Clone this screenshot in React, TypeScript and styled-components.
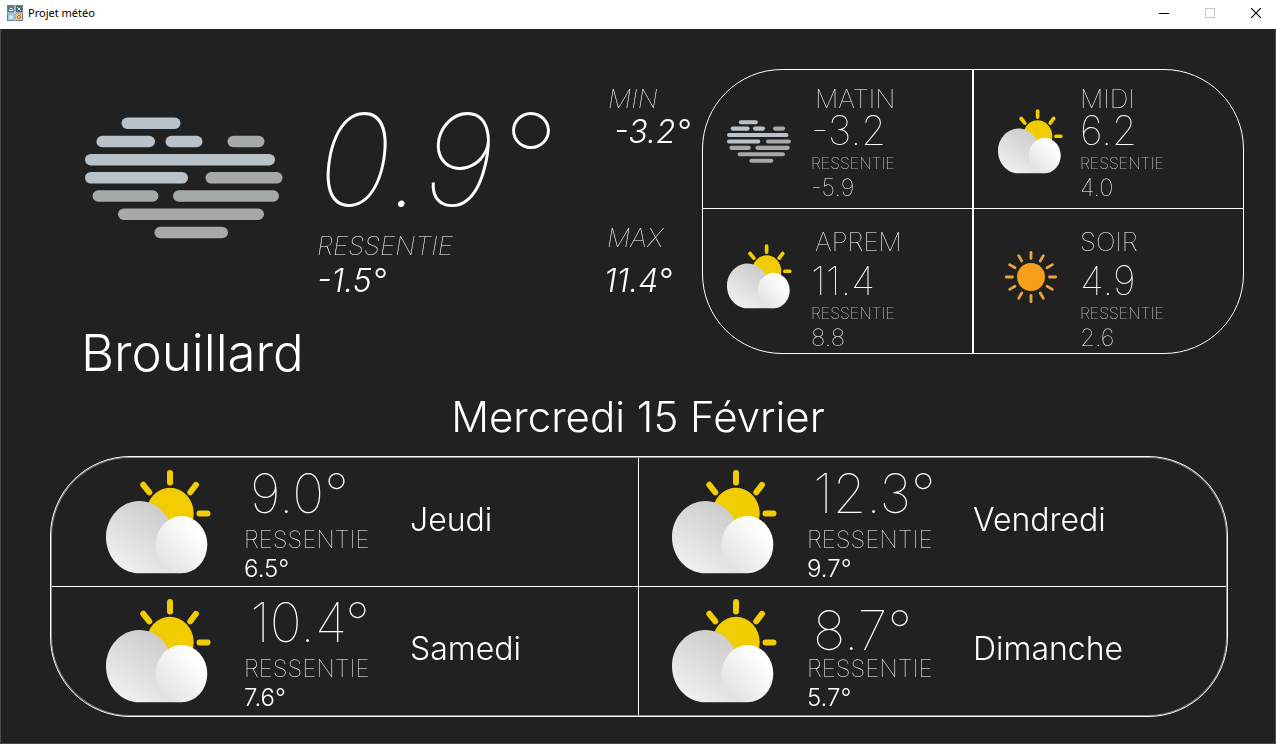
import React, { useId } from "react";
import styled, { createGlobalStyle } from "styled-components";

const GlobalStyle = createGlobalStyle`
  *, *::before, *::after { box-sizing: border-box; }
  body {
    margin: 0;
    background: #212121;
    color: #fff;
    font-family: Inter, "Liberation Sans", sans-serif;
    font-optical-sizing: none;
  }
  h1, h2, h3, p { margin: 0; font-weight: inherit; }
`;

/* ---------- window chrome ---------- */

const Window = styled.div`
  display: flex;
  flex-direction: column;
  min-height: 100vh;
`;

const TitleBar = styled.header`
  display: flex;
  align-items: center;
  height: 29px;
  padding: 0 0 3px 7px;
  background: #fff;
  color: #000;
`;

const WindowTitle = styled.span`
  flex: 1;
  margin-left: 5px;
  font: 400 11px/20px "Noto Sans", "Open Sans", sans-serif;
`;

const WindowControls = styled.div`
  display: flex;
  gap: 6px;
`;

const WindowButton = styled.button`
  display: flex;
  align-items: center;
  justify-content: center;
  width: 40px;
  height: 26px;
  padding: 0;
  border: 0;
  background: transparent;
  color: #000;

  &:disabled {
    color: #c8c8c8;
  }
`;

const Content = styled.main`
  flex: 1;
  padding: 40px 0 24px;
  border: 1px solid #4a4a4a;
  border-top: 0;
  will-change: transform;
`;

/* ---------- current weather ---------- */

const Overview = styled.section`
  display: grid;
  grid-template-columns: minmax(0, 1fr) minmax(0, 542px);
  align-items: start;
  padding-right: 31px;
`;

const Current = styled.div`
  padding-left: 80px;
`;

const CurrentRow = styled.div`
  display: grid;
  grid-template-columns: 236px minmax(0, 1fr) 98px;
`;

const CurrentIcon = styled.div`
  padding: 48px 0 0 4px;
`;

const CurrentReading = styled.div`
  padding-top: 27px;
`;

const CurrentTemp = styled.p`
  margin-bottom: 6px;
  font-size: 128px;
  font-style: italic;
  font-weight: 100;
  line-height: 128px;
  white-space: nowrap;
`;

const Extremes = styled.div`
  display: flex;
  flex-direction: column;
  gap: 73px;
  padding-top: 14px;
`;

const Stat = styled.div<{ $gap: number }>`
  display: flex;
  flex-direction: column;
  gap: ${(p) => p.$gap}px;
  font-style: italic;
  white-space: nowrap;
`;

const StatLabel = styled.span<{ $inset?: number }>`
  padding-left: ${(p) => p.$inset ?? 0}px;
  font-size: 26px;
  font-weight: 100;
  line-height: 32px;
`;

const StatValue = styled.span<{ $inset?: number }>`
  padding-left: ${(p) => p.$inset ?? 0}px;
  font-size: 32px;
  font-weight: 300;
  line-height: 34px;
`;

const Condition = styled.h1`
  margin-top: 25px;
  font-size: 51px;
  font-weight: 300;
  line-height: 60px;
`;

/* ---------- forecast by time of day ---------- */

const HourPanel = styled.div`
  display: grid;
  grid-template-columns: calc(50% - 1px) minmax(0, 1fr);
  overflow: hidden;
  border: 1px solid #fff;
  border-radius: 80px;
`;

const HourCell = styled.article<{ $right?: boolean; $lower?: boolean }>`
  display: grid;
  grid-template-columns: ${(p) => (p.$right ? "82px" : "84px")} minmax(0, 1fr);
  padding: ${(p) => (p.$lower ? "17px 0 2px" : "13px 0 7px")};
  padding-left: 24px;
  border-left: ${(p) => (p.$right ? "2px solid #fff" : "0")};
  border-top: ${(p) => (p.$lower ? "1px solid #fff" : "0")};
  white-space: nowrap;
`;

const HourIcon = styled.div<{ $drop: number }>`
  padding-top: ${(p) => p.$drop}px;
`;

const HourName = styled.h3<{ $gap: number; $inset: number }>`
  padding-left: ${(p) => p.$inset}px;
  margin-bottom: ${(p) => p.$gap}px;
  font-size: 26px;
  font-weight: 100;
  line-height: 32px;
`;

const HourTemp = styled.p`
  margin-bottom: 4px;
  font-size: 40px;
  font-weight: 100;
  line-height: 32px;
`;

const HourLabel = styled.p`
  font-size: 16px;
  font-weight: 100;
  line-height: 24px;
`;

const HourFeels = styled.p`
  font-size: 24px;
  font-weight: 100;
  line-height: 26px;
`;

/* ---------- following days ---------- */

const Today = styled.h2`
  margin: 9px 0 14px;
  font-size: 42px;
  font-weight: 300;
  line-height: 50px;
  text-align: center;
`;

const DayPanel = styled.section`
  display: grid;
  grid-template-columns: calc(50% - 1px) minmax(0, 1fr);
  margin: 0 47px 0 49px;
  padding: 1px;
  border: 1px solid #fff;
  border-radius: 80px;
  box-shadow: inset 0 0 0 1px #8c8c8c;
`;

const DayCell = styled.article<{ $right?: boolean; $lower?: boolean }>`
  display: grid;
  grid-template-columns: ${(p) => (p.$right ? "135px" : "138px")} 166px minmax(0, 1fr);
  padding-left: ${(p) => (p.$right ? "33px" : "54px")};
  border-left: ${(p) => (p.$right ? "1px solid #fff" : "0")};
  border-top: ${(p) => (p.$lower ? "1px solid #fff" : "0")};
  white-space: nowrap;
`;

const DayIcon = styled.div`
  padding-top: 12px;
`;

const DayReading = styled.div<{ $low?: boolean }>`
  padding: ${(p) => (p.$low ? "24px" : "8px")} 0 4px;
`;

const DayTemp = styled.p<{ $low?: boolean }>`
  margin-bottom: 2px;
  padding-left: 6px;
  font-size: 54px;
  font-weight: 100;
  line-height: ${(p) => (p.$low ? "40px" : "56px")};
`;

const DayLabel = styled.p`
  font-size: 24px;
  font-weight: 100;
  line-height: 32px;
`;

const DayFeels = styled.p`
  font-size: 24px;
  font-weight: 300;
  line-height: 26px;
`;

const DayName = styled.h3`
  align-self: center;
  padding-bottom: 4px;
  font-size: 32px;
  font-weight: 300;
  line-height: 40px;
`;

/* ---------- drawings ---------- */

const Drawing = styled.svg`
  display: block;
`;

const fogBars: [number, number, number, boolean][] = [
  [36.5, 95.5, 0, true],
  [11.5, 70, 1, true],
  [80.5, 117.5, 1, true],
  [142.5, 179.5, 1, false],
  [0, 190, 2, true],
  [0, 103, 3, true],
  [120.5, 197.5, 3, false],
  [7.5, 73.5, 4, false],
  [88, 194, 4, false],
  [33, 179, 5, false],
  [69.5, 143, 6, false],
];

function FogIcon({ width, height }: { width: number; height: number }) {
  return (
    <Drawing width={width} height={height} viewBox="0 0 198 122" preserveAspectRatio="none" aria-hidden>
      {fogBars.map(([from, to, row, bright]) => (
        <rect
          key={`${row}-${from}`}
          x={from}
          y={0.5 + row * 18.2}
          width={to - from}
          height="11.5"
          rx="5.75"
          fill={bright ? "#b9c1c9" : "#a5a9a9"}
        />
      ))}
    </Drawing>
  );
}

function CloudSunIcon({ width, height }: { width: number; height: number }) {
  const id = useId();
  return (
    <Drawing width={width} height={height} viewBox="0 0 105 104" aria-hidden>
      <defs>
        <linearGradient id={`${id}back`} x1="0.75" y1="0.15" x2="0.2" y2="0.95">
          <stop offset="0" stopColor="#cdcdcd" />
          <stop offset="1" stopColor="#f0f0f0" />
        </linearGradient>
        <linearGradient id={`${id}front`} x1="0.75" y1="0.2" x2="0.1" y2="0.85">
          <stop offset="0" stopColor="#ffffff" />
          <stop offset="1" stopColor="#e2e2e2" />
        </linearGradient>
      </defs>
      <g stroke="#f0cc00" strokeWidth="6" strokeLinecap="round">
        <path d="M64 3v9.5M93.5 43.5h8M90 14.8l-5.7 7.5M37.3 14.8l6 7.5" />
      </g>
      <ellipse cx="64" cy="43.3" rx="23.7" ry="25.6" fill="#f0cc00" />
      <path
        d="M33.3 31C51.5 31 66.5 47.1 66.5 67S75 103.300 75 103.300H33.300C15 103.300 0 87.100 0 67.200S15 31 33.300 31Z"
        fill={`url(#${id}back)`}
      />
      <ellipse cx="75.500" cy="74.700" rx="25.800" ry="28.600" fill={`url(#${id}front)`} />
    </Drawing>
  );
}

function SunIcon() {
  return (
    <Drawing width="54" height="54" viewBox="-27 -27 54 54" aria-hidden>
      <circle r="14" fill="#f79f1a" />
      <g stroke="#eba439" strokeWidth="2.800" strokeLinecap="round">
        {Array.from({ length: 12 }, (_, i) => (
          <path key={i} d="M0-24.700V-18.500" transform={`rotate(${i * 30})`} />
        ))}
      </g>
    </Drawing>
  );
}

function AppIcon() {
  return (
    <Drawing width="16" height="16" viewBox="0 0 16 16" aria-hidden>
      <path fill="#6f7d84" d="M0 0h16v16H0z" />
      <path fill="#5b7b8c" d="M1 1h6v6H1z" />
      <path fill="#3f6580" d="M9 1h6v6H9z" />
      <path fill="#8fd3f2" d="M1 9h6v6H1z" />
      <path fill="#f2c48c" d="M9 9h6v6H9z" />
      <path fill="none" stroke="#e8f1f4" d="M2 5.500h4.500M2.500 4.500 4 3l2 1.500M10 2l4 4M10.500 5.500l3-3M4 10v4M2 12h4" />
      <path fill="none" stroke="#b5602c" d="m12 10 2 2-2 2-2-2z" />
      <path fill="none" stroke="#dfe6e8" d="M8 0v16M0 8h16" />
    </Drawing>
  );
}

/* ---------- data ---------- */

type Sky = "fog" | "cloud" | "sun";

const hours: { name: string; temp: string; feels: string; sky: Sky; drop: number; inset: number }[] = [
  { name: "MATIN", temp: "-3.2", feels: "-5.9", sky: "fog", drop: 37, inset: 4 },
  { name: "MIDI", temp: "6.2", feels: "4.0", sky: "cloud", drop: 26, inset: 0 },
  { name: "APREM", temp: "11.4", feels: "8.8", sky: "cloud", drop: 18, inset: 4 },
  { name: "SOIR", temp: "4.9", feels: "2.6", sky: "sun", drop: 24, inset: 0 },
];

const days: { name: string; temp: string; feels: string; low?: boolean }[] = [
  { name: "Jeudi", temp: "9.0°", feels: "6.5°" },
  { name: "Vendredi", temp: "12.3°", feels: "9.7°" },
  { name: "Samedi", temp: "10.4°", feels: "7.6°" },
  { name: "Dimanche", temp: "8.7°", feels: "5.7°", low: true },
];

const SunSlot = styled.div`
  padding-left: 6px;
`;

function SkyIcon({ sky }: { sky: Sky }) {
  if (sky === "fog") return <FogIcon width={64} height={43} />;
  if (sky === "cloud") return <CloudSunIcon width={65} height={65} />;
  return (
    <SunSlot>
      <SunIcon />
    </SunSlot>
  );
}

export default function App() {
  return (
    <Window>
      <GlobalStyle />
      <TitleBar>
        <AppIcon />
        <WindowTitle>Projet météo</WindowTitle>
        <WindowControls>
          <WindowButton type="button" aria-label="Réduire">
            <Drawing width="10" height="11" viewBox="0 0 10 11" shapeRendering="crispEdges">
              <path d="M0 5h10v1H0z" fill="currentColor" />
            </Drawing>
          </WindowButton>
          <WindowButton type="button" aria-label="Agrandir" disabled>
            <Drawing width="10" height="10" viewBox="0 0 10 10">
              <rect x="0.5" y="0.5" width="9" height="9" fill="none" stroke="currentColor" />
            </Drawing>
          </WindowButton>
          <WindowButton type="button" aria-label="Fermer">
            <Drawing width="10" height="10" viewBox="0 0 10 10">
              <path d="m0 0 10 10M10 0 0 10" stroke="currentColor" strokeWidth="1.200" />
            </Drawing>
          </WindowButton>
        </WindowControls>
      </TitleBar>

      <Content>
        <Overview>
          <Current>
            <CurrentRow>
              <CurrentIcon>
                <FogIcon width={198} height={122} />
              </CurrentIcon>
              <CurrentReading>
                <CurrentTemp>0.9°</CurrentTemp>
                <Stat $gap={2}>
                  <StatLabel>RESSENTIE</StatLabel>
                  <StatValue>-1.5°</StatValue>
                </Stat>
              </CurrentReading>
              <Extremes>
                <Stat $gap={0}>
                  <StatLabel $inset={4}>MIN</StatLabel>
                  <StatValue $inset={10}>-3.2°</StatValue>
                </Stat>
                <Stat $gap={10}>
                  <StatLabel $inset={3}>MAX</StatLabel>
                  <StatValue>11.4°</StatValue>
                </Stat>
              </Extremes>
            </CurrentRow>
            <Condition>Brouillard</Condition>
          </Current>

          <HourPanel>
            {hours.map((h, i) => {
              const lower = i > 1;
              return (
                <HourCell key={h.name} $right={i % 2 === 1} $lower={lower}>
                  <HourIcon $drop={h.drop}>
                    <SkyIcon sky={h.sky} />
                  </HourIcon>
                  <div>
                    <HourName $gap={lower ? 7 : 0} $inset={h.inset}>
                      {h.name}
                    </HourName>
                    <HourTemp>{h.temp}</HourTemp>
                    <HourLabel>RESSENTIE</HourLabel>
                    <HourFeels>{h.feels}</HourFeels>
                  </div>
                </HourCell>
              );
            })}
          </HourPanel>
        </Overview>

        <Today>Mercredi 15 Février</Today>

        <DayPanel>
          {days.map((d, i) => (
            <DayCell key={d.name} $right={i % 2 === 1} $lower={i > 1}>
              <DayIcon>
                <CloudSunIcon width={105} height={104} />
              </DayIcon>
              <DayReading $low={d.low}>
                <DayTemp $low={d.low}>{d.temp}</DayTemp>
                <DayLabel>RESSENTIE</DayLabel>
                <DayFeels>{d.feels}</DayFeels>
              </DayReading>
              <DayName>{d.name}</DayName>
            </DayCell>
          ))}
        </DayPanel>
      </Content>
    </Window>
  );
}
